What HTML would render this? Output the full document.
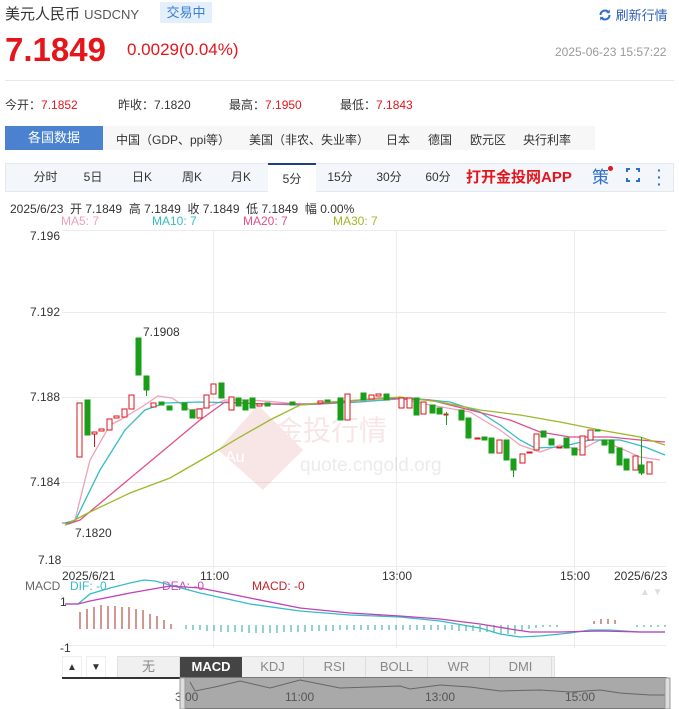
<!DOCTYPE html>
<html><head><meta charset="utf-8"><style>
*{margin:0;padding:0;box-sizing:border-box}
body{width:679px;height:709px;background:#fff;font-family:"Liberation Sans","Noto Sans CJK SC",sans-serif;position:relative;overflow:hidden;color:#333}
.a{position:absolute;white-space:nowrap}
.r{color:#e4151b}
.tab{position:absolute;top:163px;height:29px;line-height:29px;font-size:12px;color:#333;text-align:center}
</style></head><body>
<div class="a" style="left:5px;top:3px;font-size:15px;color:#333">美元人民币 <span style="font-size:13px;color:#555">USDCNY</span></div>
<div class="a" style="left:160px;top:2px;width:52px;height:21px;background:#e3effb;color:#3b7fd0;font-size:13px;line-height:21px;text-align:center">交易中</div>
<div class="a" style="left:598px;top:5px;font-size:13px;color:#2d5fb5"><svg width="14" height="14" viewBox="0 0 14 14" style="vertical-align:-2px"><path d="M2.5 7a4.5 4.5 0 0 1 8-2.8" stroke="#2d6fc9" stroke-width="2" fill="none"/><path d="M11.5 7a4.5 4.5 0 0 1-8 2.8" stroke="#2d6fc9" stroke-width="2" fill="none"/><path d="M11.8 1.5v3.6h-3.6z" fill="#2d6fc9"/><path d="M2.2 12.5V8.9h3.6z" fill="#2d6fc9"/></svg> 刷新行情</div>
<div class="a r" style="left:5px;top:31px;font-size:33px;font-weight:bold">7.1849</div>
<div class="a r" style="left:127px;top:40px;font-size:17px">0.0029(0.04%)</div>
<div class="a" style="left:555px;top:45px;font-size:12px;color:#999">2025-06-23 15:57:22</div>
<div class="a" style="left:5px;top:80px;width:669px;height:1px;background:#e8e8e8"></div>
<div class="a" style="left:5px;top:96px;font-size:12px">今开：<span class="r">7.1852</span></div>
<div class="a" style="left:118px;top:96px;font-size:12px">昨收：7.1820</div>
<div class="a" style="left:229px;top:96px;font-size:12px">最高：<span class="r">7.1950</span></div>
<div class="a" style="left:340px;top:96px;font-size:12px">最低：<span class="r">7.1843</span></div>
<div class="a" style="left:5px;top:126px;width:98px;height:24px;background:#4a82d0;color:#fff;font-size:13px;line-height:24px;text-align:center">各国数据</div>
<div class="a" style="left:103px;top:126px;width:492px;height:24px;background:#f7f7f7"></div>
<div class="a" style="left:116px;top:131px;font-size:12px">中国（GDP、ppi等）</div>
<div class="a" style="left:249px;top:131px;font-size:12px">美国（非农、失业率）</div>
<div class="a" style="left:386px;top:131px;font-size:12px">日本</div>
<div class="a" style="left:428px;top:131px;font-size:12px">德国</div>
<div class="a" style="left:470px;top:131px;font-size:12px">欧元区</div>
<div class="a" style="left:523px;top:131px;font-size:12px">央行利率</div>
<div class="a" style="left:5px;top:163px;width:669px;height:29px;background:#f3f6fb;border:1px solid #e3e8f0"></div>
<div class="tab" style="left:23px;width:45px">分时</div>
<div class="tab" style="left:73px;width:40px">5日</div>
<div class="tab" style="left:122px;width:40px">日K</div>
<div class="tab" style="left:172px;width:40px">周K</div>
<div class="tab" style="left:221px;width:40px">月K</div>
<div class="tab" style="left:268px;width:48px;background:#fff;border-top:2px solid #1f3f86;height:30px">5分</div>
<div class="tab" style="left:320px;width:40px">15分</div>
<div class="tab" style="left:369px;width:40px">30分</div>
<div class="tab" style="left:418px;width:40px">60分</div>
<div class="tab" style="left:466px;font-size:15px;font-weight:bold;color:#e4151b">打开金投网APP</div>
<div class="tab" style="left:592px;font-size:17px;color:#2d6fc9">策</div>
<div class="a" style="left:608px;top:166px;width:5px;height:5px;border-radius:50%;background:#e4151b"></div>
<div class="a" style="left:626px;top:168px;width:14px;height:14px;border:2px solid #2d6fc9"></div>
<div class="a" style="left:630px;top:166px;width:6px;height:18px;background:#f3f6fb"></div>
<div class="a" style="left:624px;top:172px;width:18px;height:6px;background:#f3f6fb"></div>
<div class="a" style="left:657px;top:167px;font-size:14px;color:#2d6fc9;line-height:7px;font-weight:bold">·<br>·<br>·</div>
<div class="a" style="left:10px;top:200px;font-size:12px;color:#333">2025/6/23 &nbsp;开 7.1849 &nbsp;高 7.1849 &nbsp;收 7.1849 &nbsp;低 7.1849 &nbsp;幅 0.00%</div>
<div class="a" style="left:61px;top:214px;font-size:12px;color:#f0a0b8">MA5: 7</div>
<div class="a" style="left:152px;top:214px;font-size:12px;color:#35bcc8">MA10: 7</div>
<div class="a" style="left:243px;top:214px;font-size:12px;color:#e0508a">MA20: 7</div>
<div class="a" style="left:333px;top:214px;font-size:12px;color:#9db82a">MA30: 7</div>
<svg class="a" style="left:0;top:0" width="679" height="709">
<g stroke="#ececec" stroke-width="1">
<line x1="62" y1="230.5" x2="666" y2="230.5"/><line x1="62" y1="312.5" x2="666" y2="312.5"/><line x1="62" y1="397.5" x2="666" y2="397.5"/><line x1="62" y1="482.5" x2="666" y2="482.5"/><line x1="62" y1="566.5" x2="666" y2="566.5"/>
<line x1="213.5" y1="230" x2="213.5" y2="648"/><line x1="396.5" y1="230" x2="396.5" y2="648"/><line x1="574.5" y1="230" x2="574.5" y2="648"/>
<line x1="62" y1="645.5" x2="666" y2="645.5"/>
</g>
<g font-size="12" fill="#333" font-family="Liberation Sans,sans-serif">
<text x="30" y="240">7.196</text><text x="30" y="316">7.192</text><text x="30" y="401">7.188</text><text x="30" y="486">7.184</text><text x="38" y="564">7.18</text>
<text x="62" y="580">2025/6/21</text><text x="200" y="580">11:00</text><text x="382" y="580">13:00</text><text x="560" y="580">15:00</text><text x="614" y="580">2025/6/23</text>
<text x="143" y="336">7.1908</text><text x="75" y="537">7.1820</text>
</g>
<g opacity="0.12"><path d="M218 450l40-45 45 45-40 40z" fill="#c33"/><text x="225" y="462" font-size="16" fill="#fff">Au</text><text x="275" y="440" font-size="28" fill="#c33" font-family="Noto Sans CJK SC">金投行情</text><text x="300" y="471" font-size="19" fill="#666">quote.cngold.org</text></g>
<polyline fill="none" stroke="#f0a0b8" stroke-width="1.3" points="65,523 75,520 90,460 110,425 120,420 140,408 158,396 172,398 190,410 205,408 225,400 250,400 300,404 350,402 400,398 430,405 470,412 500,430 520,445 540,452 560,445 580,450 600,440 620,448 640,457 660,460"/>
<polyline fill="none" stroke="#35bcc8" stroke-width="1.3" points="65,523 75,521 100,470 125,430 145,410 165,403 200,402 240,403 300,405 360,402 410,398 450,402 480,412 500,425 520,440 535,448 560,447 590,440 620,440 645,447 665,455"/>
<polyline fill="none" stroke="#e0508a" stroke-width="1.3" points="65,525 80,520 110,495 140,470 170,445 200,420 225,402 260,404 320,404 380,398 430,400 470,410 510,420 540,432 570,437 610,437 640,440 665,442"/>
<polyline fill="none" stroke="#9db82a" stroke-width="1.3" points="65,525 90,512 130,493 170,478 210,455 240,437 270,420 300,405 330,402 400,397 440,402 480,410 520,415 560,422 600,430 640,437 665,445"/>
<g stroke-width="1">
<g fill="#fff" stroke="#d9151b">
<rect x="77" y="403" width="5" height="54"/><rect x="92" y="432" width="5" height="2"/><line x1="94.5" y1="434" x2="94.5" y2="447"/><rect x="99" y="429" width="5" height="2"/><rect x="107" y="419" width="5" height="11"/><rect x="114" y="416" width="5" height="2"/><rect x="122" y="409" width="5" height="8"/><rect x="129" y="395" width="5" height="14"/><rect x="151" y="403" width="5" height="4"/><rect x="197" y="409" width="5" height="9"/><rect x="204" y="395" width="5" height="13"/><rect x="211" y="384" width="5" height="10"/>
<rect x="229" y="397" width="5" height="13"/><rect x="257" y="404" width="5" height="2"/><rect x="318" y="401" width="5" height="2"/><rect x="345" y="394" width="5" height="26"/><rect x="369" y="395" width="5" height="4"/><rect x="376" y="394" width="5" height="2"/><rect x="399" y="398" width="5" height="10"/><rect x="407" y="398" width="5" height="10"/><rect x="421" y="402" width="5" height="12"/><rect x="444" y="414" width="4" height="1"/><rect x="475" y="438" width="5" height="1"/><rect x="497" y="440" width="5" height="13"/><rect x="520" y="454" width="5" height="9"/><rect x="527" y="452" width="5" height="1"/><rect x="534" y="434" width="5" height="16"/><rect x="557" y="447" width="5" height="1"/><rect x="580" y="436" width="5" height="19"/><rect x="588" y="430" width="5" height="10"/><rect x="633" y="456" width="5" height="14"/><rect x="647" y="462" width="5" height="12"/>
</g>
<g fill="#1a9e1a" stroke="#1a9e1a">
<rect x="85" y="400" width="5" height="35"/><rect x="136" y="338" width="5" height="37"/><rect x="144" y="376" width="5" height="14"/><line x1="146.5" y1="390" x2="146.5" y2="396"/><rect x="159" y="402" width="5" height="3"/><rect x="167" y="406" width="5" height="4"/><rect x="182" y="403" width="5" height="7"/><rect x="190" y="410" width="5" height="8"/><rect x="219" y="383" width="5" height="15"/><rect x="236" y="398" width="5" height="8"/><rect x="243" y="400" width="5" height="10"/><rect x="250" y="398" width="5" height="10"/><rect x="265" y="403" width="5" height="3"/><rect x="290" y="402" width="5" height="3"/><rect x="325" y="400" width="5" height="2"/>
<rect x="338" y="398" width="5" height="22"/><rect x="361" y="393" width="5" height="7"/><rect x="384" y="394" width="5" height="6"/><rect x="414" y="398" width="5" height="17"/><rect x="430" y="405" width="5" height="8"/><rect x="437" y="408" width="5" height="6"/><line x1="446.5" y1="412" x2="446.5" y2="425"/><rect x="459" y="410" width="5" height="10"/><rect x="466" y="418" width="5" height="20"/><rect x="482" y="437" width="5" height="3"/><rect x="489" y="438" width="5" height="15"/><rect x="504" y="440" width="5" height="20"/><rect x="511" y="459" width="5" height="11"/><line x1="513.5" y1="470" x2="513.5" y2="477"/><rect x="541" y="431" width="5" height="6"/><rect x="549" y="439" width="5" height="6"/><rect x="564" y="438" width="5" height="10"/><rect x="572" y="448" width="5" height="7"/><rect x="595" y="430" width="5" height="1"/><rect x="602" y="440" width="5" height="5"/><rect x="609" y="440" width="5" height="13"/><rect x="617" y="448" width="5" height="17"/><rect x="624" y="459" width="5" height="11"/><rect x="639" y="465" width="5" height="8"/><line x1="641.5" y1="437" x2="641.5" y2="475"/>
</g>
<polyline fill="none" stroke="#777" points="62,523 72,523"/>
</g>
<g font-size="12" font-family="Liberation Sans,sans-serif"><text x="25" y="590" fill="#666">MACD</text><text x="70" y="590" fill="#35bcc8">DIF: -0</text><text x="162" y="590" fill="#d04bc0">DEA: -0</text><text x="252" y="590" fill="#c8202a">MACD: -0</text><text x="60" y="606" fill="#333">1</text><text x="60" y="652" fill="#333">-1</text></g>
<g stroke="#a03020"><line x1="80" y1="629" x2="80" y2="612"/><line x1="87" y1="629" x2="87" y2="609"/><line x1="94" y1="629" x2="94" y2="607"/><line x1="101" y1="629" x2="101" y2="605"/><line x1="108" y1="629" x2="108" y2="606"/><line x1="115" y1="629" x2="115" y2="606"/><line x1="122" y1="629" x2="122" y2="607"/><line x1="129" y1="629" x2="129" y2="607"/><line x1="136" y1="629" x2="136" y2="609"/><line x1="143" y1="629" x2="143" y2="610"/><line x1="150" y1="629" x2="150" y2="614"/><line x1="157" y1="629" x2="157" y2="616"/><line x1="164" y1="629" x2="164" y2="620"/><line x1="171" y1="629" x2="171" y2="624"/><line x1="594" y1="621" x2="594" y2="624"/><line x1="601" y1="619" x2="601" y2="624"/><line x1="608" y1="619" x2="608" y2="624"/><line x1="615" y1="620" x2="615" y2="624"/></g>
<g stroke="#2aa890">
<path d="M186 625v4M193 625v5M200 625v5M207 625v6M214 625v6M221 625v7M228 625v7M235 625v7M242 625v7M249 625v8M256 625v8M263 625v8M270 625v8M277 625v8M284 625v7M291 625v7M298 625v7M305 625v7M312 625v6M319 625v6M326 625v6M333 625v6M340 625v5M347 625v5M354 625v5M361 625v5M368 625v5M375 625v5M382 625v5M389 625v5M396 625v5M403 625v5M410 625v5M417 625v5M424 625v5M431 625v5M438 625v5M445 625v5M452 625v5M459 625v6M466 625v6M473 625v6M480 625v7M487 625v7M494 625v8M501 625v9M508 625v9M515 625v9M522 625v6M529 625v4M536 625v3M543 625v2M550 625v2M557 625v2M637 625v2M644 625v2M651 625v2M658 625v2M665 625v2"/>
</g>
<polyline fill="none" stroke="#35bcc8" stroke-width="1.3" points="65,604 78,604 90,594 110,588 130,583 144,580 155,581 170,585 200,593 250,604 300,611 350,615 400,617 440,621 480,628 500,634 520,637 540,636 570,633 590,630 610,630 640,632 665,632"/>
<polyline fill="none" stroke="#c040b8" stroke-width="1.3" points="65,604 78,604 90,601 130,593 170,586 200,588 250,598 300,608 350,613 400,616 440,619 480,624 510,629 530,632 560,632 600,631 640,632 665,632"/>
<text x="640" y="595" font-size="10" fill="#ddd">▲ ▼</text>
</svg>
<div class="a" style="left:62px;top:656px;width:20px;height:22px;background:#fff;border:1px solid #eee;font-size:10px;line-height:21px;text-align:center">▲</div>
<div class="a" style="left:86px;top:656px;width:20px;height:22px;background:#fff;border:1px solid #eee;font-size:10px;line-height:21px;text-align:center">▼</div>
<div class="a" style="left:117px;top:656px;width:438px;height:22px;background:#f0f0f0;border:1px solid #e0e0e0;display:flex;font-size:13px;color:#888;line-height:20px">
<div style="width:62px;text-align:center;border-right:1px solid #ddd">无</div>
<div style="width:62px;text-align:center;background:#444;color:#fff;font-weight:bold">MACD</div>
<div style="width:62px;text-align:center;border-right:1px solid #ddd">KDJ</div>
<div style="width:62px;text-align:center;border-right:1px solid #ddd">RSI</div>
<div style="width:62px;text-align:center;border-right:1px solid #ddd">BOLL</div>
<div style="width:62px;text-align:center;border-right:1px solid #ddd">WR</div>
<div style="width:62px;text-align:center;border-right:1px solid #ddd">DMI</div>
</div>
<div class="a" style="left:62px;top:677px;width:605px;height:2px;background:#333"></div>
<div class="a" style="left:180px;top:677px;width:487px;height:32px;background:#a9a9a9;border:1px solid #777"></div>
<svg class="a" style="left:0;top:677px" width="679" height="32"><polyline fill="none" stroke="#666" points="190,5 195,14 215,10 240,4 270,11 300,3 340,11 400,9 410,12 440,8 470,10 500,14 540,13 570,15 600,13 620,16 650,18 665,18"/>
<g font-size="12" fill="#555"><text x="175" y="24">3:00</text><text x="285" y="24">11:00</text><text x="425" y="24">13:00</text><text x="565" y="24">15:00</text></g>
<rect x="180" y="1" width="5" height="31" fill="#ddd" stroke="#999"/><rect x="665" y="1" width="5" height="31" fill="#ddd" stroke="#999"/></svg>
</body></html>
